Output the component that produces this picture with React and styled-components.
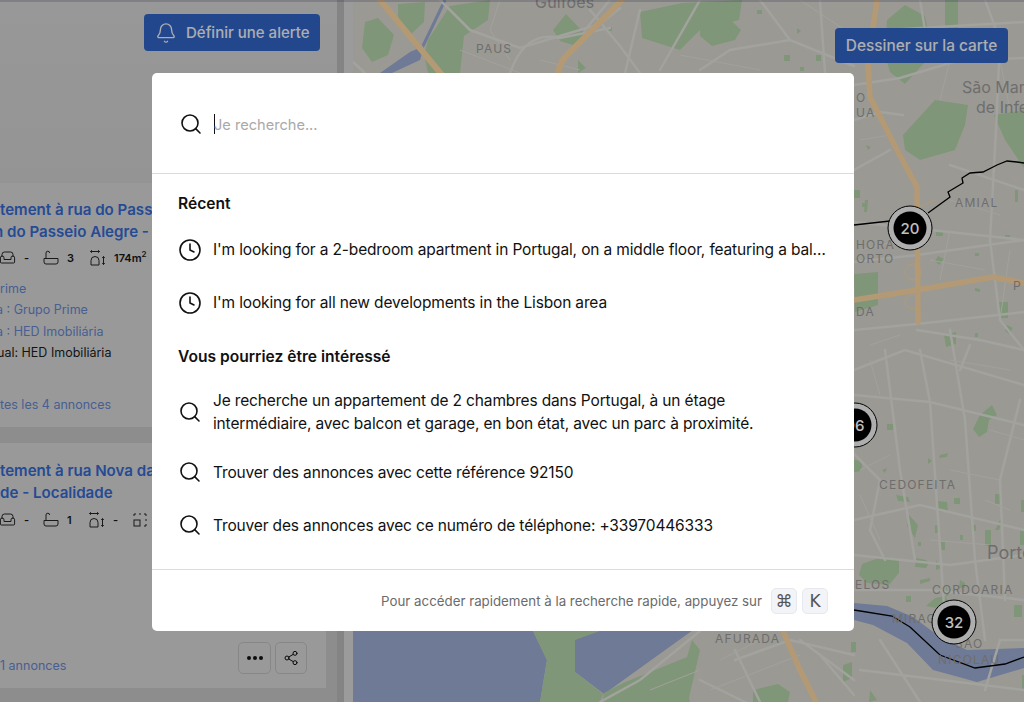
import React from "react";
import styled, { createGlobalStyle } from "styled-components";
import { Search, Clock, Bell, Share2 } from "lucide-react";

const Global = createGlobalStyle`
  html, body { margin: 0; padding: 0; height: 702px; overflow: hidden; }
  body { font-family: Inter, "Liberation Sans", sans-serif; }
  * { box-sizing: border-box; }
`;

const Page = styled.div`
  position: relative;
  display: flex;
  width: 1024px;
  height: 702px;
  overflow: hidden;
  background: #cfcfcf;
`;
const Side = styled.aside`
  display: flex;
  flex: 0 0 353px;
  background: #cfcfcf;
`;
const List = styled.div`
  flex: 0 0 337px;
  background: #bdbdbd;
  overflow: hidden;
`;
const Scroll = styled.div`
  flex: 0 0 7px;
  background: #b1b1b1;
`;
const Head = styled.div`
  height: 183px;
  padding: 14px 0 0 144px;
  background: linear-gradient(#cbcbcb, #c6c6c6);
`;
const AlertButton = styled.button`
  display: flex;
  align-items: center;
  gap: 9px;
  width: 176px;
  height: 37px;
  padding: 0 0 0 11px;
  border: 0;
  border-radius: 4px;
  background: #2f5fbb;
  color: #e6e8ee;
  font: 500 15px Inter, sans-serif;
  white-space: nowrap;
`;
const Card = styled.article`
  display: flex;
  flex-direction: column;
  width: 326px;
  height: ${p => p.$h}px;
  margin-bottom: ${p => p.$mb || 0}px;
  padding-top: ${p => p.$pt}px;
  background: #cdcdcd;
  overflow: hidden;
`;
const Title = styled.div`
  height: 22px;
  margin-left: ${p => p.$shift || 0}px;
  color: #3164c6;
  font-size: 15.1px;
  font-weight: 600;
  line-height: 22px;
  white-space: nowrap;
`;
const Specs = styled.div`
  display: flex;
  align-items: center;
  height: 20px;
  margin: ${p => p.$mt}px 0 10px -1px;
  color: #161616;
  font-size: 11px;
  font-weight: 600;
`;
const Spec = styled.span`
  display: flex;
  align-items: center;
  flex: 0 0 ${p => p.$w}px;
  gap: ${p => p.$gap || 8}px;
  white-space: nowrap;
`;
const Info = styled.div`
  height: 21.4px;
  margin-left: ${p => p.$shift || 0}px;
  color: ${p => (p.$plain ? "#1a1a1a" : "#5f7fc4")};
  font-size: 12.5px;
  line-height: 21.4px;
  white-space: nowrap;
`;
const CardFoot = styled.div`
  display: flex;
  align-items: flex-end;
  justify-content: space-between;
  margin-top: auto;
  padding: 0 19px 14px 0;
`;
const FootLink = styled.span`
  color: #5f7fc4;
  font-size: 12.5px;
  line-height: 16px;
  white-space: nowrap;
`;
const Tools = styled.div`
  display: flex;
  gap: 4px;
`;
const ToolButton = styled.button`
  display: flex;
  align-items: center;
  justify-content: center;
  width: ${p => p.$w}px;
  height: 32px;
  padding: 0;
  border: 1px solid #b5b5b5;
  border-radius: 5px;
  background: #cdcdcd;
  color: #111;
`;
const Dots = styled.span`
  display: block;
  width: 4px;
  height: 4px;
  border-radius: 50%;
  background: #111;
  box-shadow: -6px 0 #111, 6px 0 #111;
`;

const MapArea = styled.main`
  position: relative;
  flex: 1;
  background: #cfcdc5;
  overflow: hidden;
  svg { display: block; }
`;
const DrawButton = styled.button`
  position: absolute;
  top: 28px;
  right: 16px;
  width: 173px;
  height: 35px;
  padding: 0;
  border: 0;
  border-radius: 4px;
  background: #2f5fbb;
  color: #e6e8ee;
  font: 500 15.4px Inter, sans-serif;
  white-space: nowrap;
`;

const Overlay = styled.div`
  position: absolute;
  inset: 0;
  display: flex;
  justify-content: center;
  align-items: flex-start;
  padding: 73px 18px 0 0;
  background: rgba(0, 0, 0, 0.25);
  box-shadow: inset 0 2px rgba(50, 55, 80, 0.25);
`;
const Modal = styled.section`
  display: flex;
  flex-direction: column;
  width: 702px;
  height: 558px;
  border-radius: 5px;
  background: #fff;
  color: #111;
  overflow: hidden;
`;
const SearchBar = styled.div`
  display: flex;
  flex: 0 0 101px;
  align-items: center;
  gap: 10px;
  padding: 2px 26px 0 27px;
  border-bottom: 1px solid #d7dbe4;
`;
const Field = styled.div`
  display: flex;
  flex: 1;
  align-items: center;
  height: 20px;
  &::before {
    content: "";
    flex: 0 0 1px;
    height: 20px;
    margin: 0 -1px 0 1px;
    background: #111;
  }
`;
const Input = styled.input`
  flex: 1;
  padding: 2px 0 0;
  border: 0;
  outline: 0;
  background: transparent;
  font: 400 14.6px Inter, sans-serif;
  &::placeholder { color: #a9a9a9; opacity: 1; }
`;
const Body = styled.div`
  display: flex;
  flex: 1;
  flex-direction: column;
  padding: 19px 26px 0;
`;
const Heading = styled.h3`
  margin: ${p => p.$mt || 0}px 0 ${p => p.$mb || 0}px;
  font-size: 15.6px;
  font-weight: 600;
  line-height: 22px;
`;
const Row = styled.div`
  display: flex;
  align-items: center;
  gap: 11px;
  padding: ${p => (p.$multi ? 11 : 15)}px 0;
  font-size: 15.5px;
  line-height: 23px;
  letter-spacing: -0.15px;
  svg { flex: 0 0 24px; margin: -1px 0; }
`;
const RowText = styled.span`
  flex: 1;
  min-width: 0;
  max-width: ${p => (p.$multi ? "590px" : "none")};
  overflow: hidden;
  white-space: ${p => (p.$multi ? "normal" : "nowrap")};
  text-overflow: ellipsis;
`;
const Footer = styled.footer`
  display: flex;
  flex: 0 0 62px;
  align-items: center;
  justify-content: flex-end;
  gap: 5px;
  padding: 0 26px;
  border-top: 1px solid #d7dbe4;
  color: #6b6b6b;
  font-size: 13.3px;
`;
const Hint = styled.span`
  margin-right: 4px;
  white-space: nowrap;
`;
const Key = styled.kbd`
  display: flex;
  align-items: center;
  justify-content: center;
  width: 26px;
  height: 26px;
  border: 1px solid #e7e9ee;
  border-radius: 5px;
  background: #f3f4f7;
  color: #555;
  font: 400 17px "DejaVu Sans", Inter, sans-serif;
`;

const Sofa = () => (
  <svg width="17" height="16" viewBox="0 0 17 16" fill="none" stroke="#222" strokeWidth="1">
    <path d="M3 7V4.5A2.5 2.5 0 0 1 5.500 2h6A2.500 2.500 0 0 1 14 4.500V7M5 9.500h7V7.800a1.800 1.800 0 0 1 3.600 0V12a1 1 0 0 1-1 1H2.400a1 1 0 0 1-1-1V7.800a1.800 1.800 0 0 1 3.600 0z" />
  </svg>
);
const Bath = () => (
  <svg width="16" height="16" viewBox="0 0 16 16" fill="none" stroke="#222" strokeWidth="1">
    <path d="M1 8.500h14v3.500a2 2 0 0 1-2 2H3a2 2 0 0 1-2-2zM3 8.500V3a1.800 1.800 0 0 1 3.600 0" />
  </svg>
);
const Room = () => (
  <svg width="17" height="18" viewBox="0 0 17 18" fill="none" stroke="#222" strokeWidth="1">
    <path d="M1.500 2.500h9M1.500 2.500l1.500-1.200M1.500 2.500l1.500 1.200M10.500 2.500L9 1.300M10.500 2.500L9 3.700M2 16V11.500a4 4 0 0 1 8 0V16zM14.500 7.500v8M14.500 7.500l-1.200 1.500M14.500 7.500l1.200 1.500M14.500 15.500l-1.200-1.500M14.500 15.500l1.200-1.500" />
  </svg>
);
const Area = () => (
  <svg width="14" height="14" viewBox="0 0 14 14" fill="none" stroke="#222" strokeWidth="1">
    <path d="M1 3V1h2M6 1h2M11 1h2v2M13 6v2M13 11v2h-2" />
    <rect x="1" y="7" width="6" height="6" />
  </svg>
);

const greens = [
  "M365,22 L378,18 394,35 388,55 372,62 362,48Z",
  "M398,4 L425,2 424,22 410,35 398,22Z",
  "M428,40 L450,6 490,0 488,20 464,36 460,73 428,73 424,55Z",
  "M553,30 L566,14 587,36 576,46 560,41Z",
  "M640,12 L682,3 742,0 739,20 700,30 680,50 642,38Z",
  "M605,27h7v4h-7Z",
  "M578,60 L586,68 578,73Z",
  "M700,4 L720,10 741,30 735,40 712,46 700,36Z",
  "M757,10h5v4h-5Z M797,28l4,3-4,3Z M784,55h6v6h-6Z M816,55h5v6h-5Z M800,67h4v4h-4Z",
  "M887,20 L905,5 925,16 930,40 925,62 905,84 890,72 885,55Z",
  "M945,0h13v28h-13Z",
  "M903,135 L935,100 968,105 965,125 955,150 920,160 905,150Z",
  "M994,115 L1024,110 1024,168 1005,140Z",
  "M854,190h6v8h-6Z M862,203h4v4h-4Z M866,145l5,2-3,3Z M865,200l3,0-1,12-3,0Z",
  "M854,274 L878,272 878,305 855,312Z",
  "M868,289 l10,-1 0,6 -10,1Z",
  "M936,232h7v4h-7Z M1005,235h5v3h-5Z M1015,190h3v12h-3Z M938,256l6,3-5,6-4-4Z M975,253l4,0 0,3-4,0Z",
  "M975,288l5,1 0,3-5,-1Z M998,302h10v16h-10Z M1007,325l6,3-4,6-4-3Z M944,335l12,-3 0,12-10,3Z M975,333h3v4h-3Z",
  "M980,415 l12,-10 5,10 -8,5 -2,12 -8,5 -6,-8Z",
  "M887,424h6v6h-6Z M856,460a6,6 0 1 0 0.100,0Z M882,470l5,-2 -2,5Z M928,458l4,3-4,3Z M940,455l8,-2-1,4-8,1Z",
  "M896,495l12,2 2,5-12,-1Z M937,501l10,1 1,10-11,-1Z M954,498h6v6h-6Z M995,494h6v10h-6Z",
  "M909,515l9,10 -3,13 -8,-12Z M935,525h4v8h-4Z M960,535h3v5h-3Z M918,542h3v4h-3Z M940,542h5v8h-5Z M985,530h6v16h-6Z M972,525h4v6h-4Z",
  "M916,558l10,2 3,3-3,5-11,-1Z M936,560l5,8-5,2Z M960,580l5,3 0,5-6,0Z",
  "M862,564l22,-8 15,5 0,12 -10,12 -22,-2 -8,-8Z",
  "M920,580l10,-2 0,3-10,3Z M946,585l3,10-3,2Z M906,596h5v6h-5Z M935,598l10,-2 3,5-12,7-10,-2Z M1014,605h8v12h-8Z",
  "M1021,500h3v12h-3Z M1003,520l-4,10 -4,0 6,-12Z M1020,530h4v15h-4Z",
  "M851,642h5v10h-5Z M843,665 l9,-3 0,16 -9,4Z M753,690l25,-6 12,8 -2,10 -35,0Z M630,682l50,-18 10,38 -70,0Z",
  "M604,693 L623,683 687,657 692,640 700,650 688,702 602,702Z",
  "M533,631 L600,631 575,640 575,672 603,694 600,702 540,702 547,660Z",
  "M870,690l7,10-8,2Z M1022,675h2v14h-2Z",
];

const roads = [
  "M353,62 L365,73","M440,0 L470,30 M470,30 L520,48 600,24 620,8","M510,73 Q525,30 560,38 L610,28","M610,0 L585,30 M590,10 L620,46 640,73","M640,10 L625,73","M700,70 L730,50 790,40 854,66","M760,0 L790,40 M820,0 L825,73","M700,0 L660,70",
  "M854,32 L1024,22","M920,0 L925,30 M985,0 L1000,40 996,130 990,240 1000,320 1024,350","M854,85 L900,78 960,60 1024,58","M854,120 L880,112 903,115 M950,165 L1024,190","M854,170 L890,150 M854,222 L1024,240","M854,262 L917,255 1024,240","M854,330 L917,324 1024,312 M917,330 L980,340 1024,350",
  "M854,370 L905,350 1024,385","M854,395 L930,402 1024,425","M920,350 L930,402 945,620","M885,350 L900,470 915,560","M850,450 L880,480 870,530 885,560","M854,520 L920,505 1024,530","M950,330 L965,420 975,560 985,640","M854,555 L950,565 1024,555","M1020,400 L1000,480 1005,600","M854,590 L930,590 1024,600","M960,370 L970,345",
  "M700,631 L640,680 600,702","M735,660 L790,640 854,655","M700,680 L745,702 M735,650 L760,702","M800,640 L854,680 M854,695 L820,655","M860,670 L1024,690 M880,640 L920,702 M985,690 L1000,640 1024,640",
];
const thin = [
  "M500,0 L490,30 510,60 M540,60 L580,70 M680,55 L760,70 M800,0 L845,30 M460,50 L520,73",
  "M860,140 L890,135 M860,250 L900,240 M870,345 L900,335 M950,200 L1000,215 M940,100 L950,60 M1000,60 L1010,110",
  "M930,260 L985,270 M950,230 L940,280 M1010,250 L1000,320 M870,360 L880,395 M950,360 L1010,370 M990,430 L1024,440 M860,470 L890,455 M860,495 L880,540 M950,470 L1000,480 M930,540 L990,545 M985,500 L1010,510",
  "M720,660 L760,640 M710,690 L800,655 M650,690 L700,670",
];

const Cluster = ({ x, y, n }) => (
  <g>
    <circle cx={x} cy={y} r="22" fill="#e8e8e8" stroke="#000" strokeWidth="1" />
    <circle cx={x} cy={y} r="16.500" fill="#000" />
    <text x={x} y={y + 5.500} textAnchor="middle" fill="#fff" fontSize="15" fontWeight="500" fontFamily="Inter, sans-serif">{n}</text>
  </g>
);

const Label = ({ x, y, size = 12, ls = 1.2, anchor = "start", children }) => (
  <text x={x} y={y} fontFamily="Inter, sans-serif" fontSize={size} letterSpacing={ls} textAnchor={anchor} fill="#939393">{children}</text>
);

const MapDrawing = () => (
  <svg width="671" height="702" viewBox="353 0 671 702">
    <path d="M353,625 H700 L604,694 575,672 575,640 533,631 547,660 540,702 H353Z" fill="#93a3c8" />
    <path d="M854,603 L887,606 913,617 940,637 967,650 1024,648 1024,668 977,682 933,670 907,643 873,625 854,620Z" fill="#93a3c8" />
    <path d="M445,0 L423,46" stroke="#93a3c8" strokeWidth="3" fill="none" />
    <path d="M424,46 L420,60 392,73 380,73 410,52Z" fill="#93a3c8" />
    {greens.map((d, i) => <path key={i} d={d} fill="#abc9a0" />)}
    <g fill="none" stroke="#d9d8d3" strokeWidth="2.500" strokeLinecap="round">
      {roads.map((d, i) => <path key={i} d={d} />)}
    </g>
    <g fill="none" stroke="#d8d7d2" strokeWidth="1">
      {thin.map((d, i) => <path key={i} d={d} />)}
    </g>
    <g fill="none" stroke="#f0cd9c" strokeLinecap="round">
      <path d="M380,0 L442,75" strokeWidth="6" />
      <path d="M622,0 L572,50 Q558,62 558,76" strokeWidth="6" />
      <path d="M877,0 L868,63 870,97 897,150 917,187 918,322" strokeWidth="5.500" />
      <path d="M854,300 L917,290 993,277 1024,283" strokeWidth="5.500" />
      <path d="M783,631 L800,670 816,702" strokeWidth="5.500" />
      <path d="M905,272 a8,8 0 1 0 16,0 a8,8 0 1 0 -16,0 M905,302 a7,7 0 1 0 14,0 a7,7 0 1 0 -14,0 M912,210 L935,200" strokeWidth="1" />
    </g>
    <path d="M854,225 L890,221 M928,213 L950,197 948,192 963,183 962,178 970,173 983,172 997,165 1007,161 1017,162 1024,163" fill="none" stroke="#000" strokeWidth="1.300" />
    <path d="M854,610 L892,616 910,627 940,655 975,668 1005,664 1024,657" fill="none" stroke="#000" strokeWidth="1.300" />
    <Label x={535} y={8} size={16} ls={0.2}>Guifões</Label>
    <Label x={476} y={53}>PAUS</Label>
    <Label x={962} y={93} size={16} ls={0}>São Mamede</Label>
    <Label x={976} y={113} size={16} ls={0}>de Infesta</Label>
    <Label x={955} y={207}>AMIAL</Label>
    <Label x={856} y={102}>O</Label>
    <Label x={856} y={117}>UA</Label>
    <Label x={856} y={249}>HORA</Label>
    <Label x={856} y={263}>ORTO</Label>
    <Label x={856} y={316}>DA</Label>
    <Label x={1013} y={290}>P</Label>
    <Label x={879} y={489}>CEDOFEITA</Label>
    <Label x={987} y={559} size={18} ls={0}>Porto</Label>
    <Label x={932} y={594}>CORDOARIA</Label>
    <Label x={855} y={589}>ELOS</Label>
    <Label x={892} y={623}>MIRAGAIA</Label>
    <Label x={955} y={648}>SÃO</Label>
    <Label x={938} y={664}>NICOLAU</Label>
    <Label x={715} y={643}>AFURADA</Label>
    <Cluster x={855} y={425} n="96" />
    <Cluster x={910} y={228} n="20" />
    <Cluster x={954} y={622} n="32" />
  </svg>
);

const recent = [
  "I'm looking for a 2-bedroom apartment in Portugal, on a middle floor, featuring a balcony and a garage",
  "I'm looking for all new developments in the Lisbon area",
];
const suggestions = [
  { text: "Je recherche un appartement de 2 chambres dans Portugal, à un étage intermédiaire, avec balcon et garage, en bon état, avec un parc à proximité.", multi: true },
  { text: "Trouver des annonces avec cette référence 92150" },
  { text: "Trouver des annonces avec ce numéro de téléphone: +33970446333" },
];

export default function App() {
  return (
    <Page>
      <Global />
      <Side>
        <List>
          <Head>
            <AlertButton><Bell size={22} strokeWidth={1.5} />Définir une alerte</AlertButton>
          </Head>
          <Card $h={244} $mb={16} $pt={16}>
            <Title>tement à rua do Passeio Alegre</Title>
            <Title $shift={-6}>n do Passeio Alegre - Localidade</Title>
            <Specs $mt={5}>
              <Spec $w={44}><Sofa />-</Spec>
              <Spec $w={46}><Bath />3</Spec>
              <Spec $w={80}><Room /><span>174m<sup style={{ fontSize: 8, lineHeight: 0 }}>2</sup></span></Spec>
            </Specs>
            <Info>rime</Info>
            <Info $shift={-4}>a : Grupo Prime</Info>
            <Info $shift={-4}>a : HED Imobiliária</Info>
            <Info $plain $shift={-3}>ual: HED Imobiliária</Info>
            <CardFoot><FootLink>tes les 4 annonces</FootLink></CardFoot>
          </Card>
          <Card $h={245} $pt={17}>
            <Title>tement à rua Nova da Alfândega</Title>
            <Title>de - Localidade</Title>
            <Specs $mt={6}>
              <Spec $w={44}><Sofa />-</Spec>
              <Spec $w={45}><Bath />1</Spec>
              <Spec $w={45}><Room />-</Spec>
              <Spec $w={30}><Area /></Spec>
            </Specs>
            <CardFoot>
              <FootLink>1 annonces</FootLink>
              <Tools>
                <ToolButton $w={33}><Dots /></ToolButton>
                <ToolButton $w={32}><Share2 size={16} strokeWidth={1.5} /></ToolButton>
              </Tools>
            </CardFoot>
          </Card>
        </List>
        <Scroll />
      </Side>
      <MapArea>
        <MapDrawing />
        <DrawButton>Dessiner sur la carte</DrawButton>
      </MapArea>
      <Overlay>
        <Modal>
          <SearchBar>
            <Search size={24} strokeWidth={1.6} />
            <Field><Input placeholder="Je recherche..." readOnly /></Field>
          </SearchBar>
          <Body>
            <Heading $mb={8}>Récent</Heading>
            {recent.map(t => (
              <Row key={t}><Clock size={24} strokeWidth={1.6} /><RowText>{t}</RowText></Row>
            ))}
            <Heading $mt={17} $mb={9.5}>Vous pourriez être intéressé</Heading>
            {suggestions.map(s => (
              <Row key={s.text} $multi={s.multi}><Search size={24} strokeWidth={1.6} /><RowText $multi={s.multi}>{s.text}</RowText></Row>
            ))}
          </Body>
          <Footer>
            <Hint>Pour accéder rapidement à la recherche rapide, appuyez sur</Hint>
            <Key>⌘</Key>
            <Key>K</Key>
          </Footer>
        </Modal>
      </Overlay>
    </Page>
  );
}
